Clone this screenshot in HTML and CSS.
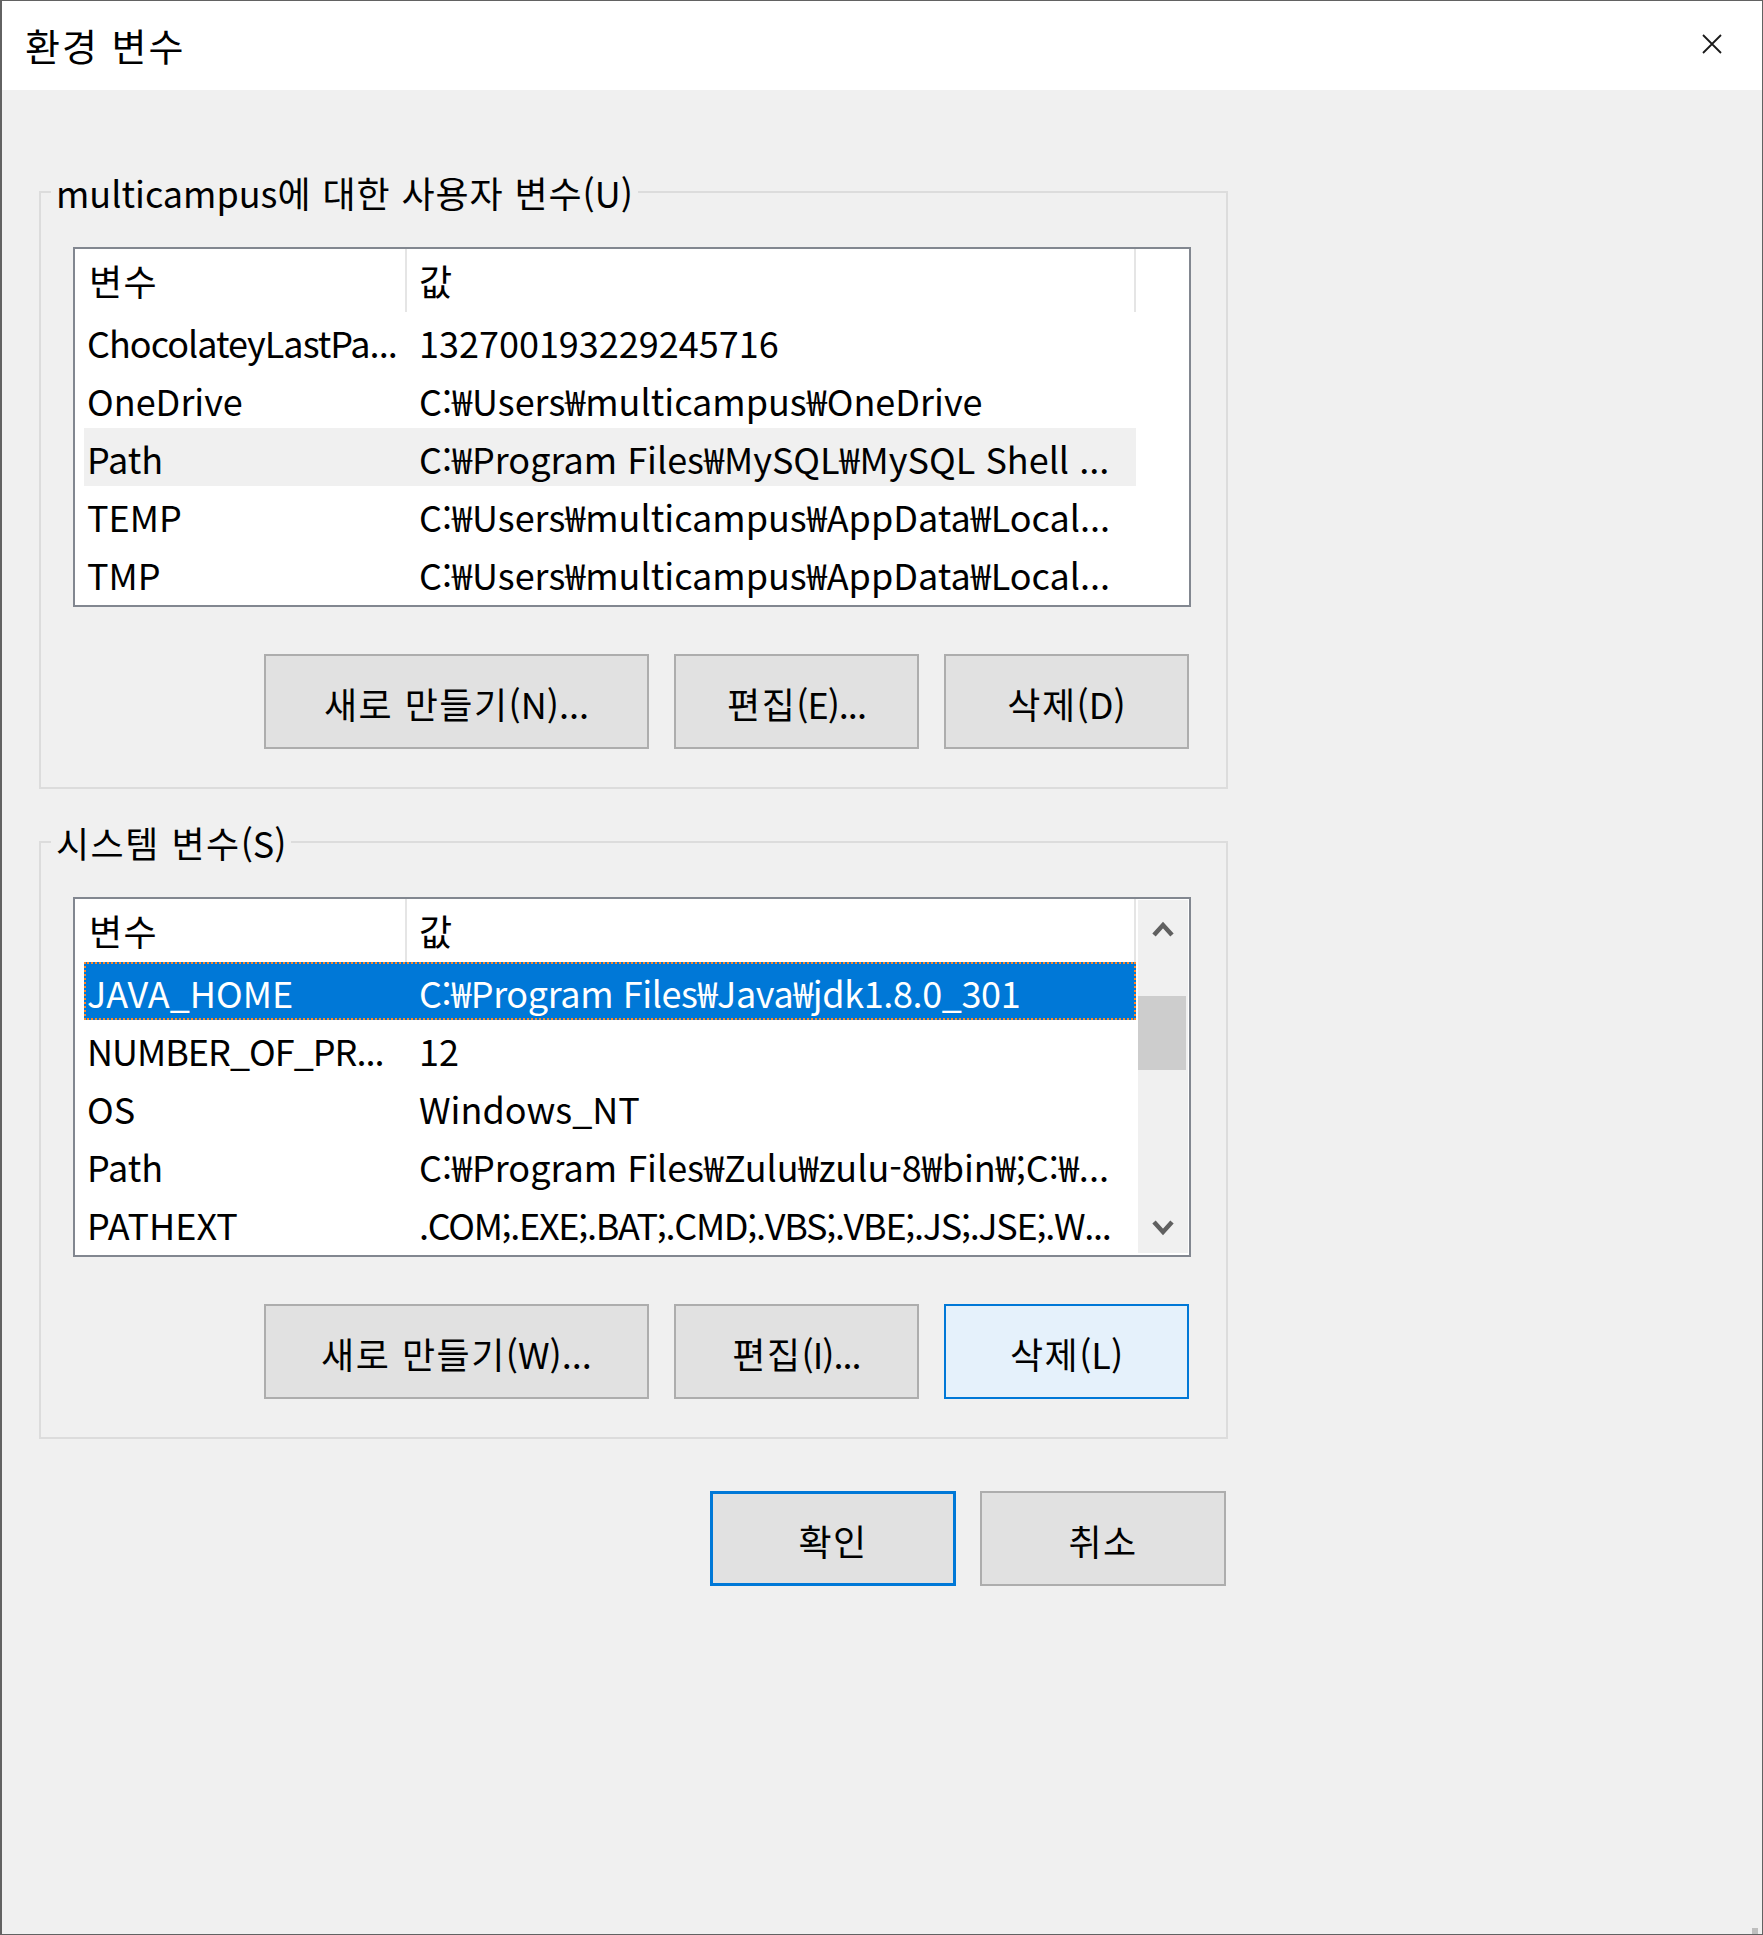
FILE: index.html
```html
<!DOCTYPE html>
<html lang="ko">
<head>
    <meta charset="UTF-8">
    <meta name="viewport" content="width=device-width, initial-scale=1.0">
    <title>환경 변수</title>
    <link rel="stylesheet" href="styles.css">
</head>
<body>
    <div class="window">
        <div class="titlebar">
            <span class="title ko">환경 변수</span>
            <span class="close">
                <svg width="20" height="20" viewBox="0 0 20 20"><path d="M1 1 L19 19 M19 1 L1 19" stroke="#1a1a1a" stroke-width="1.8" fill="none"/></svg>
            </span>
        </div>

        <div class="content">
            <!-- 사용자 변수 -->
            <fieldset class="group">
                <legend>multicampus<span class="ko narrow">에 대한 사용자 변수</span>(U)</legend>
                <div class="group-body">
                    <div class="listview">
                        <div class="list-main">
                            <div class="list-header">
                                <div class="head name ko">변수</div>
                                <div class="head value">값</div>
                            </div>
                            <div class="row"><span class="cell name tight">ChocolateyLastPa...</span><span class="cell value">132700193229245716</span></div>
                            <div class="row"><span class="cell name">OneDrive</span><span class="cell value">C:₩Users₩multicampus₩OneDrive</span></div>
                            <div class="row hover"><span class="cell name">Path</span><span class="cell value">C:₩Program Files₩MySQL₩MySQL Shell ...</span></div>
                            <div class="row"><span class="cell name">TEMP</span><span class="cell value">C:₩Users₩multicampus₩AppData₩Local...</span></div>
                            <div class="row"><span class="cell name">TMP</span><span class="cell value">C:₩Users₩multicampus₩AppData₩Local...</span></div>
                        </div>
                    </div>
                    <div class="buttons">
                        <button class="btn wide"><span class="ko">새로 만들기</span>(N)...</button>
                        <button class="btn"><span class="ko">편집</span><span class="tight">(E)...</span></button>
                        <button class="btn"><span class="ko">삭제</span>(D)</button>
                    </div>
                </div>
            </fieldset>

            <!-- 시스템 변수 -->
            <fieldset class="group system">
                <legend><span class="ko">시스템 변수</span>(S)</legend>
                <div class="group-body">
                    <div class="listview">
                        <div class="list-main">
                            <div class="list-header">
                                <div class="head name ko">변수</div>
                                <div class="head value">값</div>
                            </div>
                            <div class="row selected"><span class="cell name">JAVA_HOME</span><span class="cell value semi">C:₩Program Files₩Java₩jdk1.8.0_301</span></div>
                            <div class="row"><span class="cell name tight">NUMBER_OF_PR...</span><span class="cell value">12</span></div>
                            <div class="row"><span class="cell name">OS</span><span class="cell value">Windows_NT</span></div>
                            <div class="row"><span class="cell name">Path</span><span class="cell value">C:₩Program Files₩Zulu₩zulu-8₩bin₩;C:₩...</span></div>
                            <div class="row"><span class="cell name">PATHEXT</span><span class="cell value tighter">.COM;.EXE;.BAT;.CMD;.VBS;.VBE;.JS;.JSE;.W...</span></div>
                        </div>
                        <div class="scrollbar">
                            <div class="arrow">
                                <svg width="22" height="17" viewBox="0 0 22 17"><polyline points="2,15 11,5 20,15" stroke="#606060" stroke-width="4.5" fill="none"/></svg>
                            </div>
                            <div class="track">
                                <div class="thumb"></div>
                            </div>
                            <div class="arrow down">
                                <svg width="22" height="17" viewBox="0 0 22 17"><polyline points="2,2 11,12 20,2" stroke="#606060" stroke-width="4.5" fill="none"/></svg>
                            </div>
                        </div>
                    </div>
                    <div class="buttons">
                        <button class="btn wide"><span class="ko">새로 만들기</span>(W)...</button>
                        <button class="btn"><span class="ko">편집</span><span class="tight">(I)...</span></button>
                        <button class="btn hot"><span class="ko">삭제</span>(L)</button>
                    </div>
                </div>
            </fieldset>

            <div class="dialog-buttons">
                <button class="btn default"><span class="ko">확인</span></button>
                <button class="btn"><span class="ko">취소</span></button>
            </div>

            <div class="grip">
                <svg width="22" height="22" viewBox="0 0 22 22">
                    <rect x="16" y="0" width="6" height="6" fill="#bfbfbf"/>
                    <rect x="8" y="8" width="6" height="6" fill="#bfbfbf"/>
                    <rect x="16" y="8" width="6" height="6" fill="#bfbfbf"/>
                    <rect x="0" y="16" width="6" height="6" fill="#bfbfbf"/>
                    <rect x="8" y="16" width="6" height="6" fill="#bfbfbf"/>
                    <rect x="16" y="16" width="6" height="6" fill="#bfbfbf"/>
                </svg>
            </div>
        </div>
    </div>
</body>
</html>
```

FILE: styles.css
```css
body {
    margin: 0;
    font-family: "Noto Sans CJK KR", sans-serif;
    font-size: 36px;
    color: #000;
    background: #f0f0f0;
}
.ko {
    letter-spacing: 1.5px;
}
.ko.narrow {
    letter-spacing: 0.9px;
}
.tight {
    letter-spacing: -1px;
}
.tighter {
    letter-spacing: -1.3px;
}
.semi {
    letter-spacing: -0.4px;
}
.window {
    position: relative;
    width: 1763px;
    height: 1935px;
    box-sizing: border-box;
    border: 1px solid #626262;
    border-left-width: 2px;
    display: flex;
    flex-direction: column;
    background: #f0f0f0;
}
.titlebar {
    height: 89px;
    background: #fff;
    display: flex;
    align-items: center;
    justify-content: space-between;
}
.title {
    padding-left: 23px;
    padding-bottom: 3px;
    font-size: 38px;
    letter-spacing: 2px;
}
.close {
    width: 100px;
    height: 89px;
    display: flex;
    align-items: center;
    justify-content: center;
    padding-bottom: 4px;
    box-sizing: border-box;
}
.content {
    flex: 1;
    position: relative;
}
.group {
    margin: 82px 0 0 37px;
    width: 1189px;
    box-sizing: border-box;
    border: 2px solid #dcdcdc;
    padding: 0;
    min-inline-size: 0;
}
.group.system {
    margin-top: 33px;
}
.group legend {
    margin-left: 10px;
    padding: 0 5px;
    line-height: 40px;
}
.group-body {
    padding: 35px 35px 38px 32px;
}
.listview {
    height: 360px;
    box-sizing: border-box;
    border: 2px solid #828790;
    background: #fff;
    display: flex;
}
.list-main {
    width: 1061px;
}
.list-header {
    display: flex;
    height: 63px;
    line-height: 63px;
}
.head {
    border-right: 2px solid #e5e5e5;
    white-space: nowrap;
}
.head.name {
    width: 332px;
    padding-left: 14px;
    box-sizing: border-box;
}
.head.value {
    flex: 1;
    padding-left: 12px;
}
.row {
    display: flex;
    margin-left: 9px;
    width: 1052px;
    height: 58px;
    line-height: 58px;
    padding-top: 1px;
    box-sizing: border-box;
    white-space: nowrap;
}
.row.hover {
    background: #f0f0f0;
}
.row.selected {
    background: #0078d7;
    color: #fff;
    outline: 2px dotted #ff8728;
    outline-offset: -2px;
}
.cell {
    padding-left: 3px;
    box-sizing: border-box;
    overflow: hidden;
}
.cell.name {
    width: 332px;
}
.cell.value {
    flex: 1;
}
.scrollbar {
    width: 50px;
    margin: 1px 1px 2px 2px;
    background: #f0f0f0;
    display: flex;
    flex-direction: column;
}
.arrow {
    height: 57px;
    display: flex;
    align-items: center;
    justify-content: center;
}
.arrow.down {
    padding-top: 8px;
    box-sizing: border-box;
}
.track {
    flex: 1;
}
.thumb {
    margin-top: 39px;
    width: 48px;
    height: 74px;
    background: #cdcdcd;
}
.buttons {
    display: flex;
    justify-content: flex-end;
    gap: 25px;
    margin-top: 47px;
    margin-right: 2px;
}
.btn {
    width: 245px;
    height: 95px;
    box-sizing: border-box;
    border: 2px solid #adadad;
    background: #e1e1e1;
    font-family: "Noto Sans CJK KR", sans-serif;
    font-size: 36px;
    color: #000;
    padding: 2px 0 0;
    white-space: nowrap;
}
.btn.wide {
    width: 385px;
}
.btn.hot {
    background: #e5f1fb;
    border-color: #0078d7;
}
.dialog-buttons {
    display: flex;
    justify-content: flex-end;
    gap: 24px;
    width: 1189px;
    margin: 52px 0 0 37px;
    padding-right: 2px;
    box-sizing: border-box;
}
.dialog-buttons .btn {
    width: 246px;
}
.btn.default {
    border: 3px solid #0078d7;
}
.grip {
    position: absolute;
    right: 4px;
    bottom: 4px;
    width: 22px;
    height: 22px;
}
```
